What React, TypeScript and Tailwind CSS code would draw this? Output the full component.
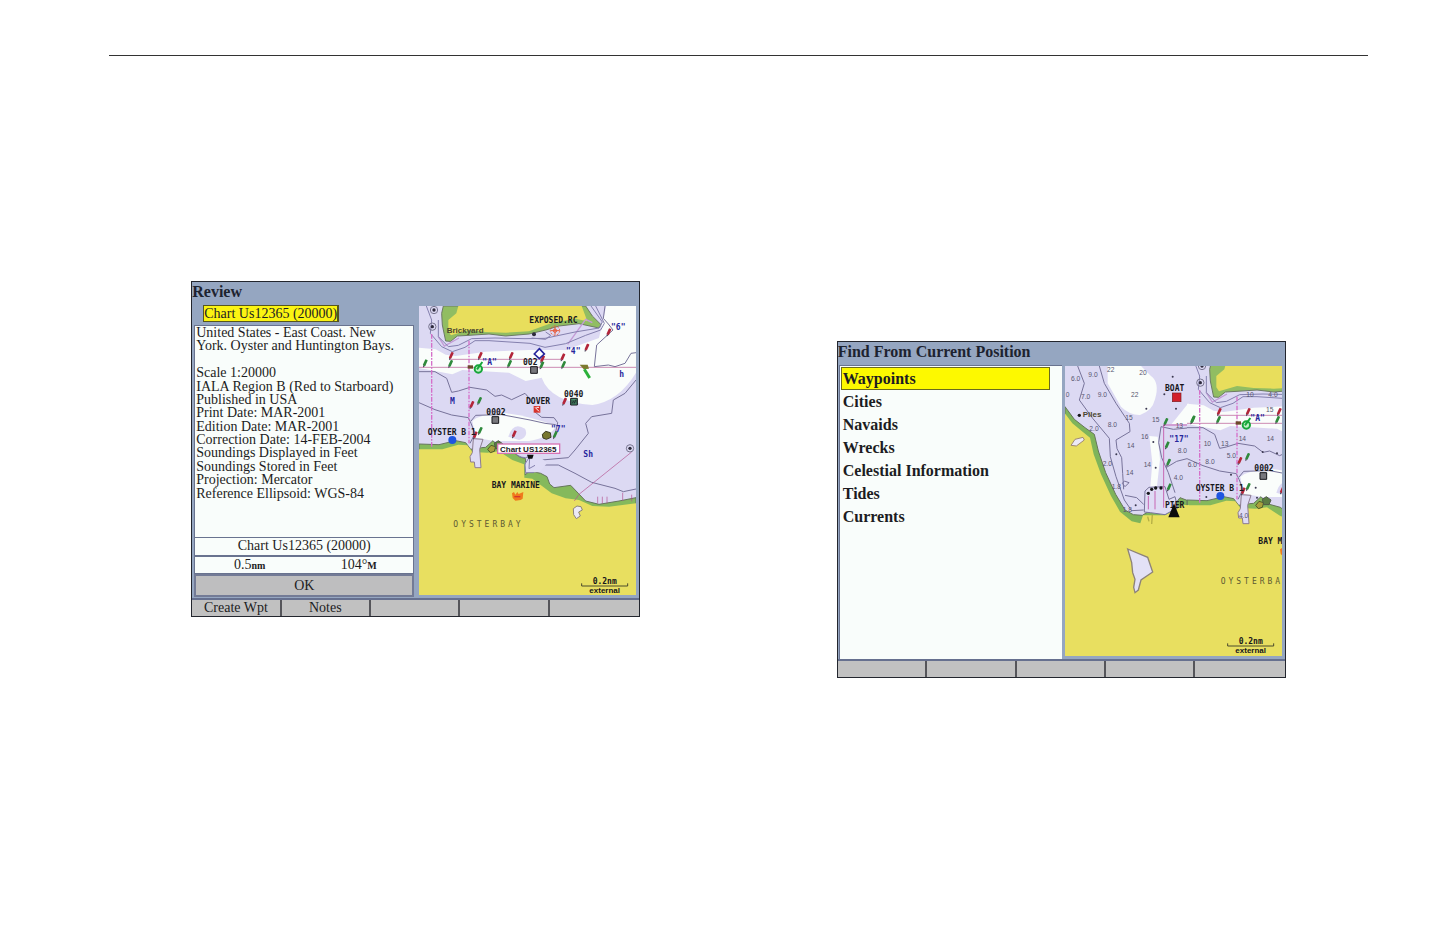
import type { ReactNode } from 'react';

const chartInfo = [
  'United States - East Coast. New',
  'York. Oyster and Huntington Bays.',
  '',
  'Scale 1:20000',
  'IALA Region B (Red to Starboard)',
  'Published in USA',
  'Print Date: MAR-2001',
  'Edition Date: MAR-2001',
  'Correction Date: 14-FEB-2004',
  'Soundings Displayed in Feet',
  'Soundings Stored in Feet',
  'Projection: Mercator',
  'Reference Ellipsoid: WGS-84',
];

const findItems = ['Waypoints', 'Cities', 'Navaids', 'Wrecks', 'Celestial Information', 'Tides', 'Currents'];

// [x, y, color] in chart units (3 units = 1px)
const buoys: [number, number, string][] = [
  [96, 150, '#b3263a'], [183, 150, '#b3263a'], [276, 150, '#b3263a'], [158, 297, '#b3263a'],
  [168, 388, '#b3263a'], [285, 385, '#b3263a'], [370, 160, '#b3263a'], [431, 154, '#b3263a'],
  [503, 125, '#b3263a'], [569, 79, '#b3263a'], [436, 287, '#b3263a'],
  [18, 172, '#2f8a3c'], [94, 174, '#2f8a3c'], [271, 174, '#2f8a3c'], [181, 285, '#2f8a3c'],
  [183, 375, '#2f8a3c'], [368, 178, '#2f8a3c'], [433, 177, '#2f8a3c'], [408, 387, '#2f8a3c'],
];

const soundings: [number, number, string][] = [
  [18, 44, '6.0'], [70, 32, '9.0'], [126, 17, '22'], [223, 28, '20'], [198, 92, '22'], [48, 100, '7.0'],
  [98, 92, '9.0'], [2, 92, '0'], [181, 162, '15'], [128, 184, '8.0'], [73, 194, '2.0'], [261, 168, '15'],
  [228, 218, '16'], [186, 246, '14'], [113, 300, '2.0'], [236, 302, '14'], [183, 328, '14'], [140, 370, '1.8'],
  [173, 437, '1.8'], [603, 137, '15'], [416, 240, '10'], [468, 239, '13'], [521, 225, '14'], [605, 225, '14'],
  [338, 260, '8.0'], [485, 277, '5.0'], [368, 304, '6.0'], [421, 293, '8.0'], [326, 342, '4.0'], [522, 457, '4.0'],
  [544, 92, '10'], [610, 94, '4.0'], [332, 186, '13'],
];

const dots: [number, number][] = [
  [244, 128], [298, 85], [333, 128], [154, 265], [212, 418], [265, 228], [272, 305],
  [323, 32], [593, 258], [636, 262], [498, 326], [572, 365], [576, 395], [424, 393],
];

function Buoy({ x, y, color }: { x: number; y: number; color: string }) {
  return (
    <g transform={`translate(${x} ${y}) rotate(24)`}>
      <rect x="-4" y="-12" width="8" height="20" rx="2" fill={color} />
      <path d="M-3 8 L0 14 L3 8" fill="#4b3f57" />
    </g>
  );
}

function Label({ x, y, children, blue }: { x: number; y: number; children: ReactNode; blue?: boolean }) {
  return (
    <text
      x={x}
      y={y}
      className={`font-['DejaVu_Sans_Mono',monospace] text-[24px] font-bold ${blue ? 'fill-[#26269c]' : 'fill-[#17171c]'}`}
    >
      {children}
    </text>
  );
}

function PlaceName({ x, y, children }: { x: number; y: number; children: ReactNode }) {
  return (
    <text x={x} y={y} className="fill-[#4a4630] font-['Liberation_Sans',sans-serif] text-[24px] font-bold">
      {children}
    </text>
  );
}

function TownName({ x, y, children }: { x: number; y: number; children: ReactNode }) {
  return (
    <text x={x} y={y} className="fill-[#5d5a33] font-['DejaVu_Sans_Mono',monospace] text-[24px] tracking-[9px]">
      {children}
    </text>
  );
}

// Water, shores and markers that both charts have in common
function Harbor() {
  return (
    <g>
      {/* deep water */}
      <path d="M0 125 L50 130 L80 146 L110 150 L200 137 L330 132 L440 132 L540 96 L562 0 H651 V200 Q600 285 520 297 Q395 288 368 215 L320 225 L270 200 L130 192 L100 205 L0 186Z" fill="#fafdfb" />
      <path d="M160 345 Q190 320 260 322 Q330 330 410 360 Q395 395 330 405 L225 405 L170 395Z" fill="#fafdfb" />
      <path d="M268 392 Q282 345 318 368 Q330 392 300 402Z" fill="#dcd9f3" />

      {/* north shore */}
      <path
        d="M73 0 L68 22 L70 57 L80 105 L95 106 L115 90 L150 88 L210 84 L260 90 L330 84 L380 72 L420 60 L480 53 L540 66 L546 56 L520 30 L500 0Z"
        fill="#91bd62"
        stroke="#6c7a63"
        strokeWidth="3"
      />
      <path d="M118 0 L112 22 L88 42 L88 76 L96 88 L150 72 L200 78 L260 80 L330 76 L400 50 L470 38 L505 46 L488 0Z" fill="#e8de5c" />

      {/* depth contours */}
      <path d="M446 115 L500 40 L520 50 M58 92 L76 120 L120 96" fill="none" stroke="#c39bd6" strokeWidth="4" />
      <g fill="none" stroke="#8480ae" strokeWidth="3">
        <path d="M22 0 L38 42 L34 82 L68 122 L100 137 L138 124 L168 104 L210 104 L333 112 L378 124 L440 113 L500 88 L545 72 L556 52 L530 0" />
        <path d="M58 42 L58 92 L88 122 L118 118 L158 98 L228 96 L318 98 L378 97 L468 78 L540 66 L550 48 L516 0" />
        <path d="M338 96 L380 100 L395 88 L380 78" />
      </g>
      <g fill="none" stroke="#77739a" strokeWidth="3">
        <path d="M0 197 L48 197 L83 217 L98 259 L118 255 L153 244 L203 252 L228 271 L248 267 L278 281 L318 262 L332 278 L338 290" />
        <path d="M348 318 L368 334 L405 335 L416 350 L410 378" />
        <path d="M0 290 L48 311 L98 327 L148 335 L156 352 L168 382 L153 412" />
        <path d="M156 345 L170 328 L248 326 L333 342 L378 352 L410 356" />
        <path d="M558 0 L553 37 L568 54 L582 72 L533 117 L526 182 L568 177 L588 182 L618 172 L636 142 L651 140" />
        <path d="M651 222 L618 262 L583 282 L578 322 L518 332 L500 352 L508 382 L468 432 L448 455 L368 462 L340 485" />
        <path d="M340 500 L368 477 L418 477 L468 502 L518 529 L588 547 L613 557 L651 549" />
      </g>

      {/* south shore */}
      <path
        d="M0 414 L60 416 L110 404 L140 410 L155 430 L188 425 L200 424 L222 404 L240 425 L280 436 L300 452 L320 458 L318 507 L332 495 L365 502 L384 512 L392 534 L405 545 L455 538 L478 562 L500 585 L540 595 L600 585 L651 575 V900 H0Z"
        fill="#85b95c"
        stroke="#66765c"
        strokeWidth="3"
      />
      <path
        d="M0 430 L70 430 L118 416 L145 418 L160 438 L205 440 L240 436 L280 462 L315 475 L316 515 L340 518 L358 532 L398 562 L440 577 L480 582 L520 600 L570 602 L651 592 V900 H0Z"
        fill="#e8df60"
      />
      <path d="M163 398 L160 440 L153 452 L155 468 L166 468 L168 485 L186 485 L182 430 L192 400Z" fill="#dfdcf5" stroke="#8c7c90" strokeWidth="3" />
      <path d="M322 462 L338 455 L345 440 L385 470 L362 498 L320 500 L318 478Z" fill="#dfdcf5" />
      <path d="M286 438 Q305 462 332 452 L318 474 L320 500 L345 500 M332 455 L330 488 L348 478" fill="none" stroke="#8480ae" strokeWidth="3" />
      <path d="M463 608 L474 600 L486 602 L490 612 L479 618 L484 630 L472 638 L464 626Z" fill="#eceaf6" stroke="#8d8379" strokeWidth="3" />

      {/* routes */}
      <g fill="none" stroke="#b4508e" strokeWidth="2">
        <path d="M93 160 H431 M0 184 H651" />
        <path d="M466 585 L480 565 L638 438" />
        <path d="M536 572 v20 M550 572 v20 M564 572 v20 M611 560 v24 M638 566 v20" />
      </g>
      <g fill="none" stroke="#d56fc9" strokeWidth="4" strokeDasharray="14 4 5 4">
        <path d="M38 84 V425 M150 104 V412" />
      </g>

      {/* beacons and towers */}
      {[[45, 12], [40, 62], [633, 427]].map(([cx, cy]) => (
        <g key={cy}>
          <circle cx={cx} cy={cy} r="11" fill="none" stroke="#77758f" strokeWidth="3" />
          <circle cx={cx} cy={cy} r="5" fill="#2d2b3d" />
        </g>
      ))}
      {buoys.map(([x, y, color]) => (
        <Buoy key={`${x}-${y}`} x={x} y={y} color={color} />
      ))}
      <circle cx="178" cy="189" r="11" fill="#bff0c4" stroke="#17a63a" strokeWidth="6" />
      <path d="M174 190 L190 168" stroke="#17a63a" strokeWidth="6" />
      <path d="M146 178 h16 v10 h-16z" fill="#6c4a2a" />
      <path d="M482 176 l24 0 l4 12 l-16 2z" fill="#7d7a2f" />
      <path d="M496 190 L512 216" stroke="#2bb13a" strokeWidth="9" />
      <path d="M361 128 L376 144 L361 158 L346 144Z" fill="#fff" stroke="#26269c" strokeWidth="5" />
      <g fill="none" stroke="#e65a3a" strokeWidth="3">
        <circle cx="408" cy="74" r="14" strokeDasharray="6 4" />
        <circle cx="408" cy="74" r="5" />
        <path d="M396 74 h24 M408 62 v24" />
      </g>
      <circle cx="345" cy="85" r="6" fill="#2d2b3d" />
      <g stroke="#17171c" strokeWidth="3">
        <path d="M335 182 h20 v20 h-20z" fill="#77777c" />
        <path d="M219 332 h20 v20 h-20z" fill="#77777c" />
        <path d="M455 277 h20 v20 h-20z" fill="#4f9a72" />
      </g>
      <path d="M459 281 v12 l6 -10 v10 l6 -12 v12" fill="none" stroke="#17171c" strokeWidth="2" />
      <path d="M344 300 h20 v20 h-20z" fill="#d8342c" />
      <path d="M348 304 L360 316 M352 304 h8" stroke="#fff" strokeWidth="3" />
      <circle cx="100" cy="402" r="12" fill="#1f55e0" />
      <path d="M370 385 l10 -9 l14 4 l2 14 l-14 6 l-10 -4z" fill="#77772f" stroke="#3b3b22" strokeWidth="3" />
      <path d="M206 430 l10 -12 l14 4 l-4 14 l-12 4z" fill="#a9a03e" stroke="#4f5a26" strokeWidth="3" />
      <path d="M226 412 l12 -8 l14 10 l-6 14 l-16 0z" fill="#5b7d44" stroke="#4f5a46" strokeWidth="3" />
      <path d="M279 562 l6 -4 l4 8 l6 -8 l4 6 l14 -6 l-2 20 l-6 4 l-16 2 l-8 -8z" fill="#ef7a1c" />
      <path d="M286 572 h18" stroke="#d8342c" strokeWidth="4" />

      <Label x={202} y={328}>0002</Label>
      <Label x={26} y={386}>OYSTER B 1</Label>
      <Label x={190} y={178} blue>"A"</Label>
    </g>
  );
}

function ScaleBar() {
  return (
    <g>
      <Label x={521} y={834}>0.2nm</Label>
      <path d="M488 832 V840 H626 V832" fill="none" stroke="#4b4a2c" strokeWidth="3" />
      <text x="511" y="861" className="fill-[#17171c] font-['Liberation_Sans',sans-serif] text-[24px] font-bold">external</text>
    </g>
  );
}

function ReviewChart() {
  return (
    <svg viewBox="0 0 651 867" className="block w-full bg-[#dcd9f3]" role="img" aria-label="Oyster Bay chart">
      <Harbor />
      <PlaceName x={83} y={80}>Brickyard</PlaceName>
      <Label x={331} y={51}>EXPOSED.RC</Label>
      <Label x={312} y={178}>002</Label>
      <Label x={435} y={273}>0040</Label>
      <Label x={321} y={293}>DOVER</Label>
      <Label x={218} y={546}>BAY MARINE</Label>
      <Label x={576} y={72} blue>"6"</Label>
      <Label x={441} y={145} blue>"4"</Label>
      <Label x={396} y={377} blue>"7"</Label>
      <Label x={93} y={294} blue>M</Label>
      <Label x={601} y={214} blue>h</Label>
      <Label x={493} y={454} blue>Sh</Label>
      <TownName x={103} y={664}>OYSTERBAY</TownName>
      <rect x="236" y="414" width="186" height="28" fill="#fff" stroke="#d673b4" strokeWidth="4" />
      <text x="243" y="437" className="fill-[#17171c] font-['Liberation_Sans',sans-serif] text-[24px] font-bold">Chart US12365</text>
      <path d="M324 446 h20 l-4 12 h-12z" fill="#111" />
      <ScaleBar />
    </svg>
  );
}

function FindChart() {
  return (
    <svg viewBox="0 0 651 870" className="block w-full bg-[#dcd9f3]" role="img" aria-label="Cold Spring Harbor chart">
      {/* deep water west of the bay */}
      <path d="M128 0 L128 52 L168 122 Q195 148 225 147 Q262 135 270 100 Q285 50 258 30 L228 0Z" fill="#fafdfb" />
      <path d="M253 210 L278 212 L285 280 L276 360 L256 362 L262 290Z" fill="#fafdfb" />
      <path d="M370 112 L378 174 L320 174Z" fill="#fafdfb" />
      <g transform="translate(366 -12)">
        <Harbor />
      </g>

      {/* west shore */}
      <path
        d="M0 122 L28 160 L60 185 L88 205 L100 255 L122 320 L152 385 L180 432 L205 446 L232 448 L250 437 L300 440 L330 415 L345 395 L366 403 V880 H-4Z"
        fill="#7fb45a"
        stroke="#66765c"
        strokeWidth="3"
      />
      <path
        d="M-4 137 L22 172 L50 195 L75 215 L86 265 L108 325 L138 390 L165 437 L200 466 L226 472 L234 448 L300 448 L335 430 L352 416 L372 418 V880 H-4Z"
        fill="#e8df60"
      />
      <path d="M238 438 L240 375 L252 364 L300 362 L312 400 L330 392 L338 425 L300 446 L256 440Z" fill="#dfdcf5" stroke="#77739a" strokeWidth="3" />
      <path d="M18 238 L30 220 L54 214 L58 222 L34 240Z" fill="#eceaf6" stroke="#a08a70" strokeWidth="3" />
      <path d="M188 549 L248 574 L263 618 L228 642 L220 672 L210 680 L206 664 L210 640 L203 620 L200 590Z" fill="#e3e1f6" stroke="#8d8379" strokeWidth="4" />

      <g fill="none" stroke="#77739a" strokeWidth="3">
        <path d="M38 0 L58 52 L43 102 L83 157 L133 217 L136 272 L153 332 L178 402 L200 434 L236 432" />
        <path d="M103 0 L118 52 L153 112 L193 172 L195 197 L153 222 L156 248 L170 275 L173 322 L176 370" />
        <path d="M178 345 L192 350 L180 362 L172 352Z" />
        <path d="M180 388 L215 395 L236 415" />
        <path d="M366 186 L325 190 L288 182 L281 230 L290 275 L310 320 L330 380" />
        <path d="M366 278 L335 286 L303 305" />
      </g>
      <path d="M296 177 V425 M296 177 H366 M250 430 V390 M270 430 V375" fill="none" stroke="#c766b4" strokeWidth="3" />
      {[[302, 168], [306, 238], [310, 290], [312, 364], [382, 163]].map(([x, y]) => (
        <Buoy key={y} x={x} y={y} color="#2f8a3c" />
      ))}
      {dots.map(([cx, cy]) => (
        <circle key={`${cx}-${cy}`} cx={cx} cy={cy} r="3" fill="#3a3850" />
      ))}
      <g fill="#17171c">
        <circle cx="250" cy="382" r="5" />
        <circle cx="260" cy="370" r="5" />
        <circle cx="272" cy="366" r="5" />
        <circle cx="288" cy="366" r="5" />
        <circle cx="43" cy="148" r="5" />
      </g>
      <path d="M248 452 l4 14 M262 446 l-2 28" stroke="#b5ae45" strokeWidth="4" />

      {soundings.map(([x, y, depth]) => (
        <text key={`${x}-${y}`} x={x} y={y} className="fill-[#57556f] font-['Liberation_Sans',sans-serif] text-[20px]">
          {depth}
        </text>
      ))}
      <rect x="322" y="81" width="26" height="26" fill="#d3202a" stroke="#7d1c22" strokeWidth="2" />
      <Label x={300} y={76}>BOAT</Label>
      <Label x={313} y={228} blue>"17"</Label>
      <PlaceName x={53} y={154}>Piles</PlaceName>
      <Label x={300} y={427}>PIER</Label>
      <path d="M327 412 L344 454 H310Z" fill="#0c0c0c" />
      <Label x={580} y={535}>BAY M</Label>
      <TownName x={467} y={655}>OYSTERBA</TownName>
      <ScaleBar />
    </svg>
  );
}

function SoftKeys({ keys }: { keys: string[] }) {
  return (
    <div className="grid h-[18px] grid-cols-5 divide-x-2 divide-[#55555a] border-t-2 border-[#66708f] bg-[#c1c1c1]">
      {keys.map((key, i) => (
        <button key={i} type="button" aria-label={key || `Soft key ${i + 1}`} className="text-center text-[14px] leading-4 text-[#1c1c22]">
          {key}
        </button>
      ))}
    </div>
  );
}

function Unit({ title, keys, children }: { title: string; keys: string[]; children: ReactNode }) {
  return (
    <section className="mx-auto w-full max-w-[449px] border border-[#23262e] bg-[#95a6c1] font-['Liberation_Serif',serif]">
      <h2 className="h-[23px] text-[16px] leading-5 font-bold text-[#1d2330]">{title}</h2>
      {children}
      <SoftKeys keys={keys} />
    </section>
  );
}

function ReviewScreen() {
  return (
    <Unit title="Review" keys={['Create Wpt', 'Notes', '', '', '']}>
      <div className="flex gap-[5px] pr-[3px] pl-[2px] text-[14px] text-[#1c1c22]">
        <div className="flex flex-1 flex-col pb-px">
          <button type="button" className="ml-[9px] h-[17px] self-start border border-r-2 border-[#56561e] bg-[#fbf412] leading-[14px]">
            Chart Us12365 (20000)
          </button>
          <div className="mt-[3px] flex-1 border border-[#69738f] bg-[#f9fdfb] pl-px">
            <ul className="grid h-[174px] auto-rows-fr leading-[13px] whitespace-nowrap">
              {chartInfo.map((line, i) => (
                <li key={i}>{line}</li>
              ))}
            </ul>
          </div>
          <p className="h-[18px] border border-t-0 border-[#69738f] bg-[#f9fdfb] text-center leading-4">Chart Us12365 (20000)</p>
          <div className="grid h-[18px] grid-cols-2 border border-[#69738f] bg-[#f9fdfb] text-center leading-4">
            <span>0.5<small className="text-[10px] font-bold">nm</small></span>
            <span>104°<small className="text-[10px] font-bold">M</small></span>
          </div>
          <button type="button" className="h-[23px] border-2 border-[#737b96] bg-[#bebebf] leading-5">OK</button>
        </div>
        <div className="w-[217px] pt-px pb-[3px]">
          <ReviewChart />
        </div>
      </div>
    </Unit>
  );
}

function FindScreen() {
  return (
    <Unit title="Find From Current Position" keys={['', '', '', '', '']}>
      <div className="flex gap-[3px] pr-[3px] pl-px">
        <ul className="flex-1 border-t border-l border-[#69738f] bg-[#f9fdfb] p-px pr-3 text-[16px] leading-5 font-bold text-[#1c1c22]">
          {findItems.map((item, i) => (
            <li key={item}>
              <button
                type="button"
                className={`block h-[23px] w-full border pl-px text-left ${i === 0 ? 'border-[#6b6b1c] bg-[#fdf900]' : 'border-transparent'}`}
              >
                {item}
              </button>
            </li>
          ))}
        </ul>
        <div className="w-[217px] pt-px pb-[3px]">
          <FindChart />
        </div>
      </div>
    </Unit>
  );
}

export default function App() {
  return (
    <main className="min-h-screen bg-white pt-[55px] pr-[72px] pl-[109px]">
      <hr className="border-t border-[#333]" />
      <div className="grid grid-cols-2 items-start gap-8 pt-[225px]">
        <ReviewScreen />
        <div className="pt-15">
          <FindScreen />
        </div>
      </div>
    </main>
  );
}
